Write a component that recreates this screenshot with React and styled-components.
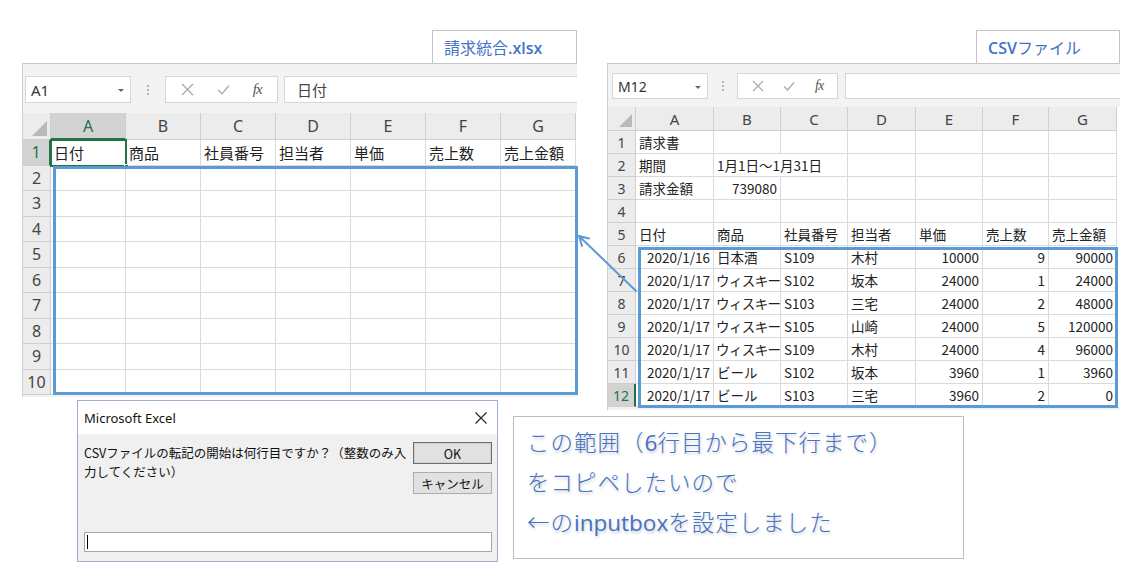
import React from "react";
import styled, { createGlobalStyle } from "styled-components";

const SEL_BLUE = "#5b9bd5";
const TEXT_BLUE = "#4472c4";
const GRID = "#dadada";
const HEAD_BG = "#ececec";
const HEAD_SEL = "#d3d3d3";
const HEAD_LINE = "#cfcfcf";
const GREEN = "#217346";

const GlobalStyle = createGlobalStyle`
  html, body { margin: 0; padding: 0; background: #fff; }
  body { font-family: "Noto Sans CJK JP", "Noto Sans", sans-serif; color: #222; }
  *, *::before, *::after { box-sizing: border-box; }
`;

const Page = styled.div`
  position: relative;
  width: 1143px;
  height: 574px;
  overflow: hidden;
  background: #fff;
`;

const TopRow = styled.div`
  display: flex;
  align-items: flex-start;
  gap: 30px;
  padding: 30px 0 0 22px;
`;

const Column = styled.div`
  display: flex;
  flex-direction: column;
  align-items: flex-end;
  width: ${(p) => p.$w}px;
`;

const FileLabel = styled.div`
  width: ${(p) => p.$w}px;
  height: 33px;
  border: 1px solid #c4c4c4;
  border-bottom: none;
  background: #fff;
  color: ${TEXT_BLUE};
  font-size: 16px;
  line-height: 18px;
  padding: 7px 0 0 11px;
  white-space: nowrap;
`;

const Latin = styled.span`
  font-family: "Open Sans", "Noto Sans", sans-serif;
  font-weight: ${(p) => p.$w || 600};
  letter-spacing: 0;
  line-height: 1;
`;

/* ---------- sheet ---------- */

const Panel = styled.div`
  width: 100%;
  background: #f3f3f3;
  border-top: 1px solid #c6c6c6;
  border-left: 1px solid #d0d0d0;
  padding-bottom: ${(p) => p.$pb}px;
`;

const FormulaBar = styled.div`
  height: ${(p) => p.$h}px;
  display: flex;
  align-items: flex-start;
  padding-top: ${(p) => p.$top}px;
  padding-left: ${(p) => p.$left}px;
`;

const NameBox = styled.div`
  width: ${(p) => p.$w}px;
  height: ${(p) => p.$h}px;
  background: #fff;
  border: 1px solid #d6d6d6;
  display: flex;
  align-items: center;
  justify-content: space-between;
  padding: 0 6px 0 5px;
  font-family: "Noto Sans", sans-serif;
  font-size: ${(p) => p.$fs}px;
  color: #333;
`;

const Caret = styled.span`
  width: 0;
  height: 0;
  border-left: 3px solid transparent;
  border-right: 3px solid transparent;
  border-top: 3px solid #666;
  margin-top: 2px;
`;

const Dots = styled.div`
  width: ${(p) => p.$w}px;
  height: ${(p) => p.$h}px;
  display: flex;
  flex-direction: column;
  align-items: center;
  justify-content: center;
  gap: 2px;
  & > i {
    width: 2px;
    height: 2px;
    background: #b5b5b5;
  }
`;

const FxGroup = styled.div`
  width: ${(p) => p.$w}px;
  height: ${(p) => p.$h}px;
  background: #fff;
  border: 1px solid #d6d6d6;
  display: flex;
  align-items: center;
  justify-content: space-around;
  padding: 0 4px;
`;

const Fx = styled.span`
  font-family: "Liberation Serif", "DejaVu Serif", serif;
  font-style: italic;
  font-size: ${(p) => p.$fs}px;
  color: #555;
  letter-spacing: -1px;
`;

const FormulaInput = styled.div`
  flex: 1;
  height: ${(p) => p.$h}px;
  margin-left: ${(p) => p.$gap}px;
  background: #fff;
  border: 1px solid #d6d6d6;
  border-right: none;
  display: flex;
  align-items: center;
  padding-left: 12px;
  font-size: ${(p) => p.$fs}px;
  color: #444;
`;

const Grid = styled.div`
  display: grid;
  grid-template-columns: ${(p) => p.$cols};
  grid-template-rows: ${(p) => p.$rows};
  background: #fff;
`;

const Corner = styled.div`
  grid-row: 1;
  grid-column: 1;
  background: ${HEAD_BG};
  border-right: 1px solid ${HEAD_LINE};
  border-bottom: 1px solid ${HEAD_LINE};
  position: relative;
  &::after {
    content: "";
    position: absolute;
    right: 3px;
    bottom: 3px;
    width: ${(p) => p.$t}px;
    height: ${(p) => p.$t}px;
    background: #b9b9b9;
    clip-path: polygon(100% 0, 100% 100%, 0 100%);
  }
`;

const ColHead = styled.div`
  grid-row: 1;
  grid-column: ${(p) => p.$c};
  background: ${(p) => (p.$active ? HEAD_SEL : HEAD_BG)};
  color: ${(p) => (p.$active ? GREEN : "#444")};
  border-right: 1px solid ${HEAD_LINE};
  border-bottom: ${(p) => (p.$active ? `2px solid ${GREEN}` : `1px solid ${HEAD_LINE}`)};
  display: flex;
  align-items: center;
  justify-content: center;
  font-family: "Noto Sans", sans-serif;
  font-size: ${(p) => p.$fs}px;
`;

const RowHead = styled.div`
  grid-row: ${(p) => p.$r};
  grid-column: 1;
  background: ${(p) => (p.$active ? HEAD_SEL : HEAD_BG)};
  color: ${(p) => (p.$active ? GREEN : "#444")};
  border-right: ${(p) => (p.$active ? `2px solid ${GREEN}` : `1px solid ${HEAD_LINE}`)};
  border-bottom: 1px solid ${HEAD_LINE};
  display: flex;
  align-items: center;
  justify-content: center;
  font-family: "Noto Sans", sans-serif;
  font-size: ${(p) => p.$fs}px;
`;

const Cell = styled.div`
  grid-row: ${(p) => p.$r};
  grid-column: ${(p) => p.$c};
  border-right: 1px solid ${(p) => (p.$spill ? "transparent" : GRID)};
  border-bottom: 1px solid ${GRID};
  display: flex;
  align-items: center;
  justify-content: ${(p) => (p.$right ? "flex-end" : "flex-start")};
  padding: 0 ${(p) => (p.$tight ? 1 : 3)}px 0 ${(p) => (p.$tight ? 2 : 3)}px;
  letter-spacing: ${(p) => (p.$tight ? "-0.6px" : "0")};
  white-space: nowrap;
  overflow: ${(p) => (p.$spill ? "visible" : "hidden")};
  font-size: ${(p) => p.$fs}px;
  color: #222;
  z-index: ${(p) => (p.$spill ? 1 : 0)};
`;

const Selection = styled.div`
  grid-row: ${(p) => p.$rows};
  grid-column: ${(p) => p.$cols};
  border: 3px solid ${SEL_BLUE};
  margin: ${(p) => p.$m};
  z-index: 3;
  pointer-events: none;
`;

const ActiveCell = styled.div`
  grid-row: ${(p) => p.$r};
  grid-column: ${(p) => p.$c};
  border: 2px solid ${GREEN};
  margin: -1px;
  z-index: 2;
  position: relative;
  pointer-events: none;
  &::after {
    content: "";
    position: absolute;
    right: -4px;
    bottom: -4px;
    width: 5px;
    height: 5px;
    background: ${GREEN};
    border: 1px solid #fff;
  }
`;

const XIcon = ({ s }) => (
  <svg width={s} height={s} viewBox="0 0 12 12">
    <path d="M1 1 L11 11 M11 1 L1 11" stroke="#a9a9a9" strokeWidth="1.2" fill="none" />
  </svg>
);

const CheckIcon = ({ s }) => (
  <svg width={s} height={s} viewBox="0 0 12 12">
    <path d="M1 6.5 L4.5 10 L11 2.5" stroke="#a9a9a9" strokeWidth="1.2" fill="none" />
  </svg>
);

const LETTERS = ["A", "B", "C", "D", "E", "F", "G"];

function Sheet({ cfg, nameBox, formula, rows, nRows, selection, activeCell, activeRow, activeCol }) {
  const cols = `${cfg.rowHeadW}px ${cfg.colW.map((w) => w + "px").join(" ")}`;
  const rowTpl = `${cfg.headH}px repeat(${nRows}, ${cfg.rowH}px)`;
  return (
    <Panel $pb={cfg.pb}>
      <FormulaBar $h={cfg.barH} $top={cfg.barTop} $left={cfg.barLeft}>
        <NameBox $w={cfg.nameW} $h={cfg.boxH} $fs={cfg.nameFs}>
          {nameBox}
          <Caret />
        </NameBox>
        <Dots $w={cfg.dotsW} $h={cfg.boxH}>
          <i />
          <i />
          <i />
        </Dots>
        <FxGroup $w={cfg.fxW} $h={cfg.boxH}>
          <XIcon s={cfg.iconS} />
          <CheckIcon s={cfg.iconS} />
          <Fx $fs={cfg.nameFs}>fx</Fx>
        </FxGroup>
        <FormulaInput $h={cfg.boxH} $gap={cfg.inputGap} $fs={cfg.cellFs}>
          {formula}
        </FormulaInput>
      </FormulaBar>
      <Grid $cols={cols} $rows={rowTpl}>
        <Corner $t={cfg.cornerT} />
        {LETTERS.map((l, i) => (
          <ColHead key={l} $c={i + 2} $fs={cfg.headFs} $active={activeCol === i}>
            {l}
          </ColHead>
        ))}
        {Array.from({ length: nRows }, (_, r) => (
          <React.Fragment key={r}>
            <RowHead $r={r + 2} $fs={cfg.rowFs} $active={activeRow === r + 1}>
              {r + 1}
            </RowHead>
            {LETTERS.map((_, c) => {
              const v = (rows[r] || [])[c];
              const obj = v != null && typeof v === "object" ? v : null;
              const text = v == null ? "" : obj ? obj.t : v;
              return (
                <Cell
                  key={c}
                  $r={r + 2}
                  $c={c + 2}
                  $fs={cfg.cellFs}
                  $right={obj && obj.right}
                  $spill={obj && obj.spill}
                  $tight={obj && obj.tight}
                >
                  {text}
                </Cell>
              );
            })}
          </React.Fragment>
        ))}
        {activeCell && <ActiveCell $r={activeCell[0] + 1} $c={activeCell[1] + 2} />}
        <Selection $rows={selection.rows} $cols={selection.cols} $m={selection.m} />
      </Grid>
    </Panel>
  );
}

const LEFT_CFG = {
  barH: 49,
  barTop: 12,
  barLeft: 2,
  boxH: 27,
  nameW: 106,
  dotsW: 34,
  fxW: 113,
  inputGap: 6,
  iconS: 13,
  nameFs: 15,
  cellFs: 15,
  headFs: 16,
  rowFs: 16,
  rowHeadW: 28,
  colW: [75, 75, 75, 75, 75, 75, 75],
  headH: 27,
  rowH: 25.5,
  cornerT: 15,
  pb: 2,
};

const RIGHT_CFG = {
  barH: 43,
  barTop: 9,
  barLeft: 4,
  boxH: 26,
  nameW: 96,
  dotsW: 29,
  fxW: 101,
  inputGap: 7,
  iconS: 12,
  nameFs: 14,
  cellFs: 13.5,
  headFs: 15,
  rowFs: 14,
  rowHeadW: 28,
  colW: [78, 67, 67, 68, 67, 66, 68],
  headH: 24,
  rowH: 23,
  cornerT: 13,
  pb: 3,
};

const HEAD_ROW = ["日付", "商品", "社員番号", "担当者", "単価", "売上数", "売上金額"];
const R = (t) => ({ t, right: true });
const WHISKY = { t: "ウィスキー", tight: true };

const LEFT_ROWS = [HEAD_ROW];

const RIGHT_ROWS = [
  ["請求書"],
  ["期間", { t: "1月1日～1月31日", spill: true }],
  ["請求金額", R("739080")],
  [],
  HEAD_ROW,
  [R("2020/1/16"), "日本酒", "S109", "木村", R("10000"), R("9"), R("90000")],
  [R("2020/1/17"), WHISKY, "S102", "坂本", R("24000"), R("1"), R("24000")],
  [R("2020/1/17"), WHISKY, "S103", "三宅", R("24000"), R("2"), R("48000")],
  [R("2020/1/17"), WHISKY, "S105", "山崎", R("24000"), R("5"), R("120000")],
  [R("2020/1/17"), WHISKY, "S109", "木村", R("24000"), R("4"), R("96000")],
  [R("2020/1/17"), "ビール", "S102", "坂本", R("3960"), R("1"), R("3960")],
  [R("2020/1/17"), "ビール", "S103", "三宅", R("3960"), R("2"), R("0")],
];

/* ---------- bottom row ---------- */

const BottomRow = styled.div`
  display: flex;
  align-items: flex-start;
  gap: 15px;
  margin-top: -10px;
  padding-left: 77px;
`;

const Dialog = styled.div`
  width: 421px;
  height: 162px;
  border: 1px solid #9fb2cc;
  background: #f0f0f0;
  display: flex;
  flex-direction: column;
`;

const TitleBar = styled.div`
  height: 33px;
  background: #fff;
  display: flex;
  align-items: center;
  justify-content: space-between;
  padding: 0 10px 0 6px;
  font-family: "Noto Sans", sans-serif;
  font-size: 13px;
  color: #111;
`;

const DialogBody = styled.div`
  flex: 1;
  display: flex;
  flex-direction: column;
  padding: 8px 5px 9px 5px;
`;

const DialogTop = styled.div`
  display: flex;
  align-items: flex-start;
  justify-content: space-between;
`;

const Message = styled.div`
  padding: 1px 0 0 1px;
  font-size: 12.5px;
  line-height: 19px;
  color: #111;
  white-space: nowrap;
`;

const ButtonCol = styled.div`
  display: flex;
  flex-direction: column;
  gap: 8px;
`;

const Button = styled.div`
  width: 79px;
  height: 22px;
  background: #e1e1e1;
  border: 1px solid ${(p) => (p.$primary ? "#6e6e6e" : "#adadad")};
  box-shadow: ${(p) => (p.$primary ? "inset 0 0 0 1px #cfcfcf" : "none")};
  display: flex;
  align-items: center;
  justify-content: center;
  font-size: 12.5px;
  color: #111;
`;

const TextInput = styled.div`
  margin-top: auto;
  margin-left: 1px;
  width: 408px;
  height: 20px;
  background: #fff;
  border: 1px solid #a6a6a6;
  display: flex;
  align-items: center;
  padding-left: 2px;
  &::before {
    content: "";
    width: 1px;
    height: 14px;
    background: #000;
  }
`;

const Note = styled.div`
  margin-top: 16px;
  width: 451px;
  height: 143px;
  border: 1px solid #bdbdbd;
  background: #fff;
  padding: 4px 0 0 13px;
  color: ${TEXT_BLUE};
  font-size: 22.5px;
  font-weight: 300;
  line-height: 40px;
  letter-spacing: 1px;
  text-shadow: 1px 2px 3px rgba(0, 0, 0, 0.2);
  white-space: nowrap;
`;

const NoteLine = styled.div`
  height: 40px;
`;

const Overlay = styled.svg`
  position: absolute;
  left: 0;
  top: 0;
  pointer-events: none;
  z-index: 5;
`;

export default function App() {
  return (
    <>
      <GlobalStyle />
      <Page>
        <TopRow>
          <Column $w={555}>
            <FileLabel $w={145}>
              請求統合<Latin>.xlsx</Latin>
            </FileLabel>
            <Sheet
              cfg={LEFT_CFG}
              nameBox="A1"
              formula="日付"
              rows={LEFT_ROWS}
              nRows={10}
              activeCell={[1, 0]}
              activeRow={1}
              activeCol={0}
              selection={{ rows: "3 / 12", cols: "2 / 9", m: "0 -2px 0 2px" }}
            />
          </Column>
          <Column $w={513}>
            <FileLabel $w={144}>
              <Latin>CSV</Latin>ファイル
            </FileLabel>
            <Sheet
              cfg={RIGHT_CFG}
              nameBox="M12"
              formula=""
              rows={RIGHT_ROWS}
              nRows={12}
              activeRow={12}
              selection={{ rows: "7 / 14", cols: "2 / 9", m: "1px -1px -1px 2px" }}
            />
          </Column>
        </TopRow>
        <BottomRow>
          <Dialog>
            <TitleBar>
              <span>Microsoft Excel</span>
              <svg width="12" height="12" viewBox="0 0 12 12">
                <path d="M0.5 0.5 L11.5 11.5 M11.5 0.5 L0.5 11.5" stroke="#222" strokeWidth="1.1" fill="none" />
              </svg>
            </TitleBar>
            <DialogBody>
              <DialogTop>
                <Message>
                  CSVファイルの転記の開始は何行目ですか？（整数のみ入
                  <br />
                  力してください）
                </Message>
                <ButtonCol>
                  <Button $primary>OK</Button>
                  <Button>キャンセル</Button>
                </ButtonCol>
              </DialogTop>
              <TextInput />
            </DialogBody>
          </Dialog>
          <Note>
            <NoteLine>
              この範囲（<Latin $w={500}>6</Latin>行目から最下行まで）
            </NoteLine>
            <NoteLine>をコピペしたいので</NoteLine>
            <NoteLine>
              ←の<Latin $w={500}>inputbox</Latin>を設定しました
            </NoteLine>
          </Note>
        </BottomRow>
        <Overlay width="1143" height="574" viewBox="0 0 1143 574">
          <path
            d="M636 291 L579 236 M579 236 L582 246 M579 236 L589 238.5"
            stroke={SEL_BLUE}
            strokeWidth="2"
            fill="none"
            strokeLinecap="round"
          />
        </Overlay>
      </Page>
    </>
  );
}
